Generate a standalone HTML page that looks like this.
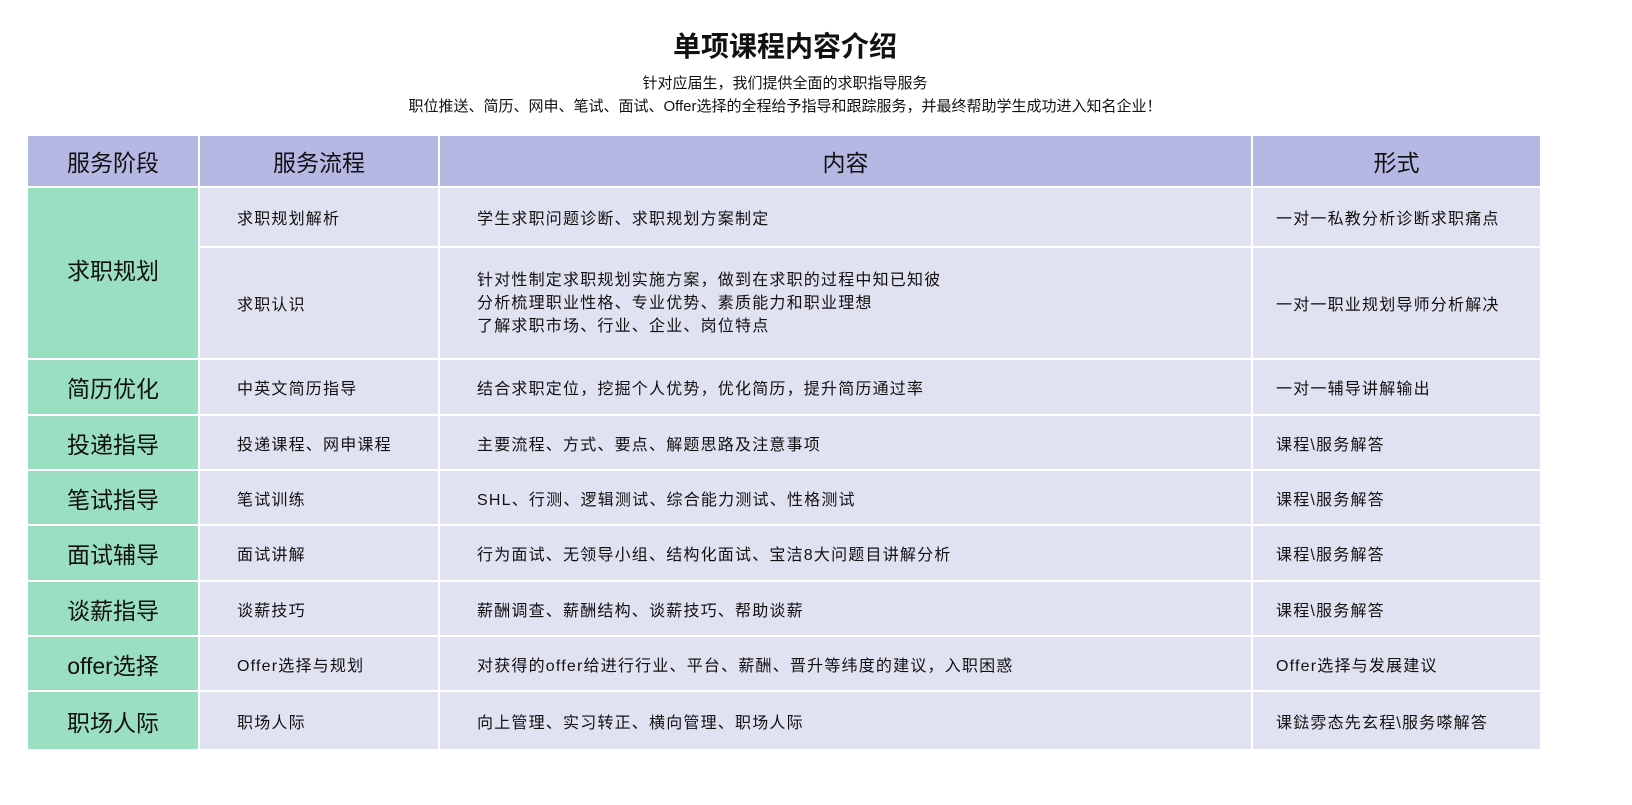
<!DOCTYPE html>
<html><head><meta charset="utf-8"><style>
body{margin:0;width:1632px;height:805px;background:#fff;position:relative;font-family:"Liberation Sans","Noto Sans CJK SC",sans-serif;color:#111;overflow:hidden}
.c{position:absolute;display:flex;align-items:center;box-sizing:border-box;font-size:16px;letter-spacing:1.2px;white-space:nowrap}
.h{background:#b6b8e4;justify-content:center;font-size:23px;letter-spacing:0}
.g{background:#9adfc1;justify-content:center;font-size:23px;letter-spacing:0}
.l{background:#e1e2f1}
.t{position:absolute;left:0;width:1570px;text-align:center}
</style></head><body>
<div class="t" style="top:25px;font-size:28px;font-weight:bold">单项课程内容介绍</div>
<div class="t" style="top:72px;font-size:15px">针对应届生，我们提供全面的求职指导服务</div>
<div class="t" style="top:95px;font-size:15px">职位推送、简历、网申、笔试、面试、Offer选择的全程给予指导和跟踪服务，并最终帮助学生成功进入知名企业！</div>

<div class="c h" style="left:28px;top:136px;width:170px;height:50px">服务阶段</div>
<div class="c h" style="left:200px;top:136px;width:238px;height:50px">服务流程</div>
<div class="c h" style="left:440px;top:136px;width:811px;height:50px">内容</div>
<div class="c h" style="left:1253px;top:136px;width:287px;height:50px">形式</div>

<div class="c g" style="left:28px;top:188px;width:170px;height:170px;padding-bottom:8px">求职规划</div>
<div class="c l" style="left:200px;top:188px;width:238px;height:58px;padding-left:37px">求职规划解析</div>
<div class="c l" style="left:440px;top:188px;width:811px;height:58px;padding-left:37px">学生求职问题诊断、求职规划方案制定</div>
<div class="c l" style="left:1253px;top:188px;width:287px;height:58px;padding-left:23px">一对一私教分析诊断求职痛点</div>
<div class="c l" style="left:200px;top:248px;width:238px;height:110px;padding-left:37px">求职认识</div>
<div class="c l" style="left:440px;top:248px;width:811px;height:110px;padding-left:37px;line-height:23px;white-space:normal"><div>针对性制定求职规划实施方案，做到在求职的过程中知已知彼<br>分析梳理职业性格、专业优势、素质能力和职业理想<br>了解求职市场、行业、企业、岗位特点</div></div>
<div class="c l" style="left:1253px;top:248px;width:287px;height:110px;padding-left:23px">一对一职业规划导师分析解决</div>

<div class="c g" style="left:28px;top:360px;width:170px;height:54px">简历优化</div>
<div class="c l" style="left:200px;top:360px;width:238px;height:54px;padding-left:37px">中英文简历指导</div>
<div class="c l" style="left:440px;top:360px;width:811px;height:54px;padding-left:37px">结合求职定位，挖掘个人优势，优化简历，提升简历通过率</div>
<div class="c l" style="left:1253px;top:360px;width:287px;height:54px;padding-left:23px">一对一辅导讲解输出</div>

<div class="c g" style="left:28px;top:416px;width:170px;height:53px">投递指导</div>
<div class="c l" style="left:200px;top:416px;width:238px;height:53px;padding-left:37px">投递课程、网申课程</div>
<div class="c l" style="left:440px;top:416px;width:811px;height:53px;padding-left:37px">主要流程、方式、要点、解题思路及注意事项</div>
<div class="c l" style="left:1253px;top:416px;width:287px;height:53px;padding-left:23px">课程\服务解答</div>

<div class="c g" style="left:28px;top:471px;width:170px;height:53px">笔试指导</div>
<div class="c l" style="left:200px;top:471px;width:238px;height:53px;padding-left:37px">笔试训练</div>
<div class="c l" style="left:440px;top:471px;width:811px;height:53px;padding-left:37px">SHL、行测、逻辑测试、综合能力测试、性格测试</div>
<div class="c l" style="left:1253px;top:471px;width:287px;height:53px;padding-left:23px">课程\服务解答</div>

<div class="c g" style="left:28px;top:526px;width:170px;height:54px">面试辅导</div>
<div class="c l" style="left:200px;top:526px;width:238px;height:54px;padding-left:37px">面试讲解</div>
<div class="c l" style="left:440px;top:526px;width:811px;height:54px;padding-left:37px">行为面试、无领导小组、结构化面试、宝洁8大问题目讲解分析</div>
<div class="c l" style="left:1253px;top:526px;width:287px;height:54px;padding-left:23px">课程\服务解答</div>

<div class="c g" style="left:28px;top:582px;width:170px;height:53px">谈薪指导</div>
<div class="c l" style="left:200px;top:582px;width:238px;height:53px;padding-left:37px">谈薪技巧</div>
<div class="c l" style="left:440px;top:582px;width:811px;height:53px;padding-left:37px">薪酬调查、薪酬结构、谈薪技巧、帮助谈薪</div>
<div class="c l" style="left:1253px;top:582px;width:287px;height:53px;padding-left:23px">课程\服务解答</div>

<div class="c g" style="left:28px;top:637px;width:170px;height:53px">offer选择</div>
<div class="c l" style="left:200px;top:637px;width:238px;height:53px;padding-left:37px">Offer选择与规划</div>
<div class="c l" style="left:440px;top:637px;width:811px;height:53px;padding-left:37px">对获得的offer给进行行业、平台、薪酬、晋升等纬度的建议，入职困惑</div>
<div class="c l" style="left:1253px;top:637px;width:287px;height:53px;padding-left:23px">Offer选择与发展建议</div>

<div class="c g" style="left:28px;top:692px;width:170px;height:57px">职场人际</div>
<div class="c l" style="left:200px;top:692px;width:238px;height:57px;padding-left:37px">职场人际</div>
<div class="c l" style="left:440px;top:692px;width:811px;height:57px;padding-left:37px">向上管理、实习转正、横向管理、职场人际</div>
<div class="c l" style="left:1253px;top:692px;width:287px;height:57px;padding-left:23px">课鍅雰态先玄程\服务嗏解答</div>
</body></html>
